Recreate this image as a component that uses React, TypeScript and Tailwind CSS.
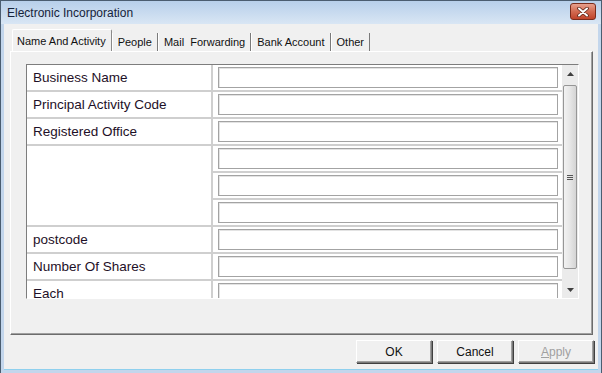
import React from "react";

const Input = () => (
  <div className="h-[21px] w-full bg-white border border-[#a3a3a3] shadow-[inset_1px_1px_0_#e3e3e3]" />
);

const Row = ({ label }: { label: string }) => (
  <div className="flex h-[27px] border-b-2 border-[#cfcfcf]">
    <div className="w-[186px] pl-[6px] pt-[2px] flex items-center text-[13.5px] text-[#1e1027] border-r-2 border-[#cfcfcf] whitespace-nowrap">
      {label}
    </div>
    <div className="flex-1 flex items-center pl-[5px] pr-[4px]">
      <Input />
    </div>
  </div>
);

const Tab = ({ label, selected }: { label: string; selected?: boolean }) =>
  selected ? (
    <div className="relative z-10 h-[22px] pl-[4px] pr-[5px] flex items-start pt-[3px] bg-[#f0f0f0] border-l border-t border-white border-r border-r-[#8a8a8a] -mb-[1px] rounded-t-[2px]">
      <span className="whitespace-pre">{label}</span>
    </div>
  ) : (
    <div className="h-[18px] mt-[4px] px-[5px] flex items-center border-l border-white border-r border-r-[#7a7a7a]">
      <span className="whitespace-pre">{label}</span>
    </div>
  );

export default function App() {
  return (
    <div
      className="w-[602px] h-[373px] flex flex-col bg-[#c3d6ec] border-t border-x border-[#4b5d70] overflow-hidden"
      style={{ fontFamily: '"Liberation Sans", Arial, sans-serif' }}
    >
      {/* Title bar */}
      <div className="h-[23px] flex items-center justify-between pl-[6px] pr-[5px] bg-gradient-to-b from-[#b7cfea] to-[#d9e6f4]">
        <span className="text-[12px] text-[#15233a]">Electronic Incorporation</span>
        <div className="w-[26px] h-[17px] mt-[-2px] rounded-[3px] border border-[#7a2c1c] bg-gradient-to-b from-[#e7a08e] via-[#d26a51] to-[#c0432a] flex items-center justify-center">
          <svg width="12" height="10" viewBox="0 0 12 10">
            <path d="M2 1.5 L10 8.5 M10 1.5 L2 8.5" stroke="#5a2418" strokeWidth="3.6" strokeLinecap="round" />
            <path d="M2 1.5 L10 8.5 M10 1.5 L2 8.5" stroke="#ffffff" strokeWidth="2" strokeLinecap="round" />
          </svg>
        </div>
      </div>

      {/* Client */}
      <div className="flex-1 mx-[3px] mb-[3px] bg-[#f0f0f0] flex flex-col border-b border-[#8fd0ee]">
        {/* Tabs */}
        <div className="flex pl-[8px] pt-[5px] text-[11px] text-[#111]">
          <Tab label="Name And Activity" selected />
          <Tab label="People" />
          <Tab label="Mail  Forwarding" />
          <Tab label="Bank Account" />
          <Tab label="Other" />
        </div>

        {/* Tab panel */}
        <div className="ml-[6px] mr-[5px] h-[284px] border-t border-l border-white border-r border-b border-r-[#6c6c6c] border-b-[#6c6c6c] shadow-[inset_-1px_-1px_0_#a0a0a0] pl-[15px] pt-[12px]">
          <div className="w-[553px] h-[235px] flex border-t border-l border-[#7d7d7d] border-r border-b border-r-white border-b-white bg-white overflow-hidden">
            <div className="flex-1 h-full overflow-hidden">
              <Row label="Business Name" />
              <Row label="Principal Activity Code" />
              <Row label="Registered Office" />
              <div className="flex h-[81px] border-b-2 border-[#cfcfcf]">
                <div className="w-[186px] border-r-2 border-[#cfcfcf]" />
                <div className="flex-1 flex flex-col">
                  <div className="h-[27px] flex items-center pl-[5px] pr-[4px] border-b-2 border-[#cfcfcf]"><Input /></div>
                  <div className="h-[27px] flex items-center pl-[5px] pr-[4px] border-b-2 border-[#cfcfcf]"><Input /></div>
                  <div className="flex-1 flex items-center pl-[5px] pr-[4px]"><Input /></div>
                </div>
              </div>
              <Row label="postcode" />
              <Row label="Number Of Shares" />
              <Row label="Each" />
            </div>
            {/* Scrollbar */}
            <div className="w-[16px] h-full bg-[#ebebeb] flex flex-col items-center">
              <div className="h-[17px] w-full flex items-center justify-center">
                <svg width="7" height="4" viewBox="0 0 7 4"><path d="M0 4 L3.5 0 L7 4 Z" fill="#3f3f3f" /></svg>
              </div>
              <div className="mt-[3px] w-[14px] h-[184px] rounded-[2px] border border-[#969696] bg-gradient-to-r from-[#f2f2f2] via-[#e6e6e6] to-[#d4d4d4] flex items-center justify-center">
                <div className="flex flex-col gap-[1px]">
                  <div className="w-[6px] h-[1px] bg-[#555]" />
                  <div className="w-[6px] h-[1px] bg-[#555]" />
                  <div className="w-[6px] h-[1px] bg-[#555]" />
                </div>
              </div>
              <div className="flex-1" />
              <div className="h-[17px] w-full flex items-center justify-center">
                <svg width="7" height="4" viewBox="0 0 7 4"><path d="M0 0 L7 0 L3.5 4 Z" fill="#3f3f3f" /></svg>
              </div>
            </div>
          </div>
        </div>

        {/* Buttons */}
        <div className="flex justify-end gap-[5px] pr-[4px] mt-[5px] text-[12px]">
          <button className="w-[76px] h-[23px] bg-[#f0f0f0] border border-[#7a7a7a] border-t-white border-l-white shadow-[inset_-1px_-1px_0_#a0a0a0,1px_1px_0_#404040] text-[#111]">OK</button>
          <button className="w-[76px] h-[23px] bg-[#f0f0f0] border border-[#7a7a7a] border-t-white border-l-white shadow-[inset_-1px_-1px_0_#a0a0a0,1px_1px_0_#404040] text-[#111]">Cancel</button>
          <button className="w-[76px] h-[23px] bg-[#f0f0f0] border border-[#7a7a7a] border-t-white border-l-white shadow-[inset_-1px_-1px_0_#a0a0a0,1px_1px_0_#404040] text-[#a0a0a0]">
            <span className="underline">A</span>pply
          </button>
        </div>
      </div>
    </div>
  );
}
